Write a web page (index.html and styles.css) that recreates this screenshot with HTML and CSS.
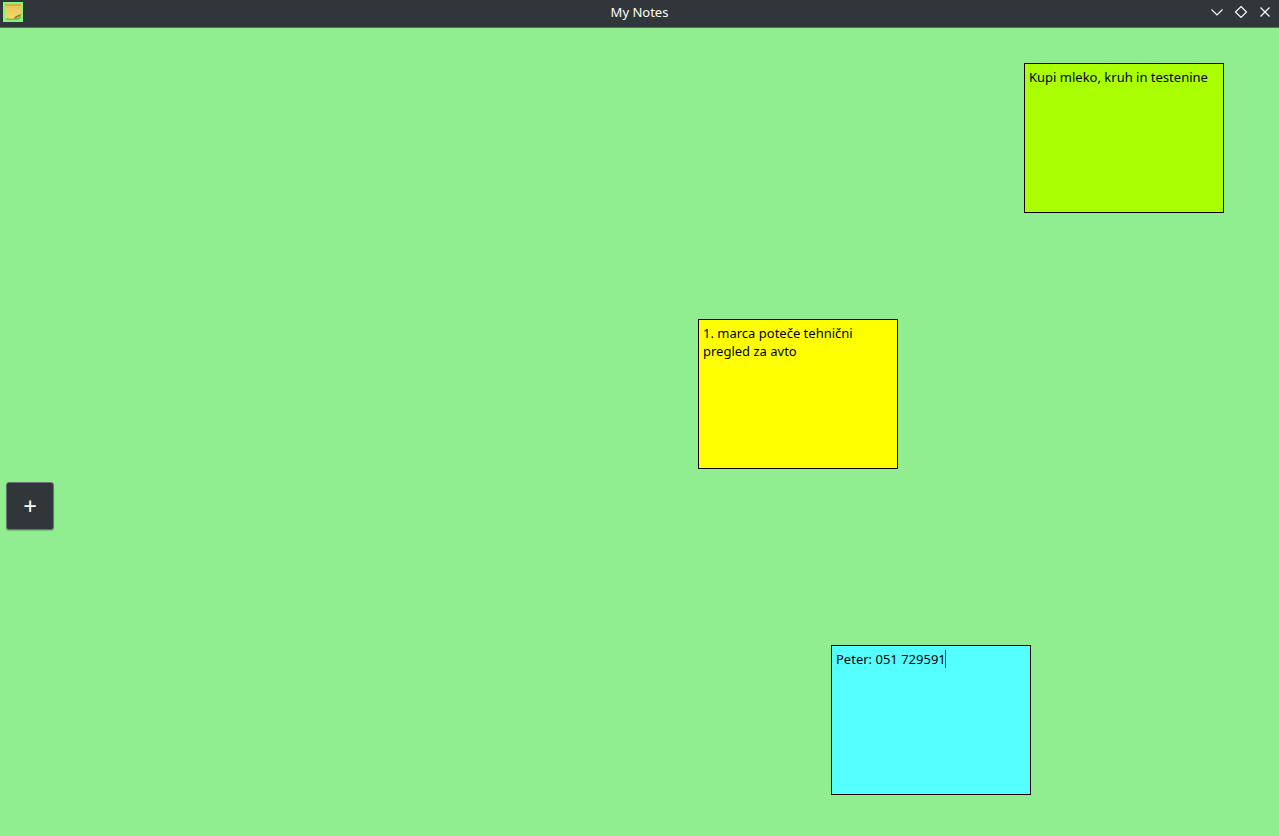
FILE: index.html
```html
<!DOCTYPE html>
<html lang="sl">
<head>
<meta charset="utf-8">
<meta name="viewport" content="width=device-width, initial-scale=1">
<title>My Notes</title>
<link rel="stylesheet" href="styles.css">
</head>
<body>
<div class="window">
  <header class="titlebar">
    <svg class="app-icon" viewBox="0 0 20 20" aria-hidden="true">
      <defs>
        <linearGradient id="paper" x1="0" y1="0" x2="0" y2="1">
          <stop offset="0" stop-color="#e3bf52"/>
          <stop offset="0.3" stop-color="#eccd5d"/>
          <stop offset="1" stop-color="#f2d968"/>
        </linearGradient>
      </defs>
      <rect width="20" height="20" fill="#7dfa7a"/>
      <path d="M2 16H10L18 12V16L15 18H4Z" fill="#8fb455"/>
      <path d="M2 3H18V12L11 17L2 16Z" fill="url(#paper)"/>
      <rect x="2" y="2" width="16" height="2" fill="#d8ab4b"/>
      <path d="M10 17L13 14L18 12V13L14 16Z" fill="#8e7a2c"/>
      <path d="M12 17L14 15L18 13L16 16Z" fill="#c9a843"/>
    </svg>
    <h1 class="title">My Notes</h1>
    <div class="controls">
      <button class="control" type="button" aria-label="Minimize">
        <svg viewBox="0 0 16 16"><path d="M2.5 5.5L8 11L13.500 5.500"/></svg>
      </button>
      <button class="control" type="button" aria-label="Maximize">
        <svg viewBox="0 0 16 16"><path d="M8 2.500L13.500 8L8 13.500L2.500 8Z"/></svg>
      </button>
      <button class="control" type="button" aria-label="Close">
        <svg viewBox="0 0 16 16"><path d="M3.500 3.500L12.500 12.500M12.500 3.500L3.500 12.500"/></svg>
      </button>
    </div>
  </header>
  <main class="board">
    <div class="tools">
      <button class="add" type="button" aria-label="Add note">+</button>
    </div>
    <div class="note note-shopping">
      <textarea class="note-text" aria-label="Shopping note" spellcheck="false">Kupi mleko, kruh in testenine</textarea>
    </div>
    <div class="note note-car">
      <textarea class="note-text" aria-label="Car note" spellcheck="false">1. marca poteče tehnični pregled za avto</textarea>
    </div>
    <div class="note note-phone">
      <textarea class="note-text" aria-label="Phone note" spellcheck="false">Peter: 051 729591</textarea>
      <span class="caret"></span>
    </div>
  </main>
</div>
</body>
</html>
```
FILE: styles.css
```css
* {
  box-sizing: border-box;
}

body {
  margin: 0;
  font-family: "Noto Sans", sans-serif;
  font-size: 13px;
  line-height: 18px;
}

.window {
  display: flex;
  flex-direction: column;
  min-height: 100vh;
  background: #90ee90;
}

.titlebar {
  display: grid;
  grid-template-columns: 1fr auto 1fr;
  align-items: center;
  padding: 2px 3px 5px;
  background: #31363b;
  border-bottom: 1px solid #5c6b60;
  color: #fcfcfc;
}

.app-icon {
  display: block;
  width: 20px;
  height: 20px;
}

.title {
  margin: 0;
  font-size: 13px;
  font-weight: 400;
}

.controls {
  display: flex;
  justify-content: flex-end;
  gap: 8px;
  padding-right: 3px;
}

.control {
  width: 16px;
  height: 16px;
  padding: 0;
  border: 0;
  background: none;
}

.control svg {
  display: block;
  fill: none;
  stroke: #fcfcfc;
  stroke-width: 1.2;
}

.board {
  position: relative;
  flex: 1;
}

.tools {
  padding: 454px 6px 0;
}

.add {
  display: block;
  width: 48px;
  height: 48px;
  padding: 0;
  border: 1px solid #6b7175;
  border-radius: 3px;
  background: #31363b;
  box-shadow: 0 1px 1px rgba(0, 0, 0, 0.2);
  color: #fcfcfc;
  font-family: inherit;
  font-size: 24px;
  line-height: 46px;
}

.note {
  position: absolute;
  width: 200px;
  height: 150px;
  border: 1px solid #000;
}

.note-shopping {
  left: 1024px;
  top: 35px;
  background: #aaff00;
}

.note-car {
  left: 698px;
  top: 291px;
  background: #ffff00;
}

.note-phone {
  left: 831px;
  top: 617px;
  background: #55ffff;
}

.note-text {
  display: block;
  width: 100%;
  height: 100%;
  padding: 4px;
  border: 0;
  outline: 0;
  resize: none;
  background: none;
  color: #000;
  font: inherit;
}

.caret {
  position: absolute;
  left: 113px;
  top: 4px;
  width: 1px;
  height: 18px;
  background: #c00000;
}
```
